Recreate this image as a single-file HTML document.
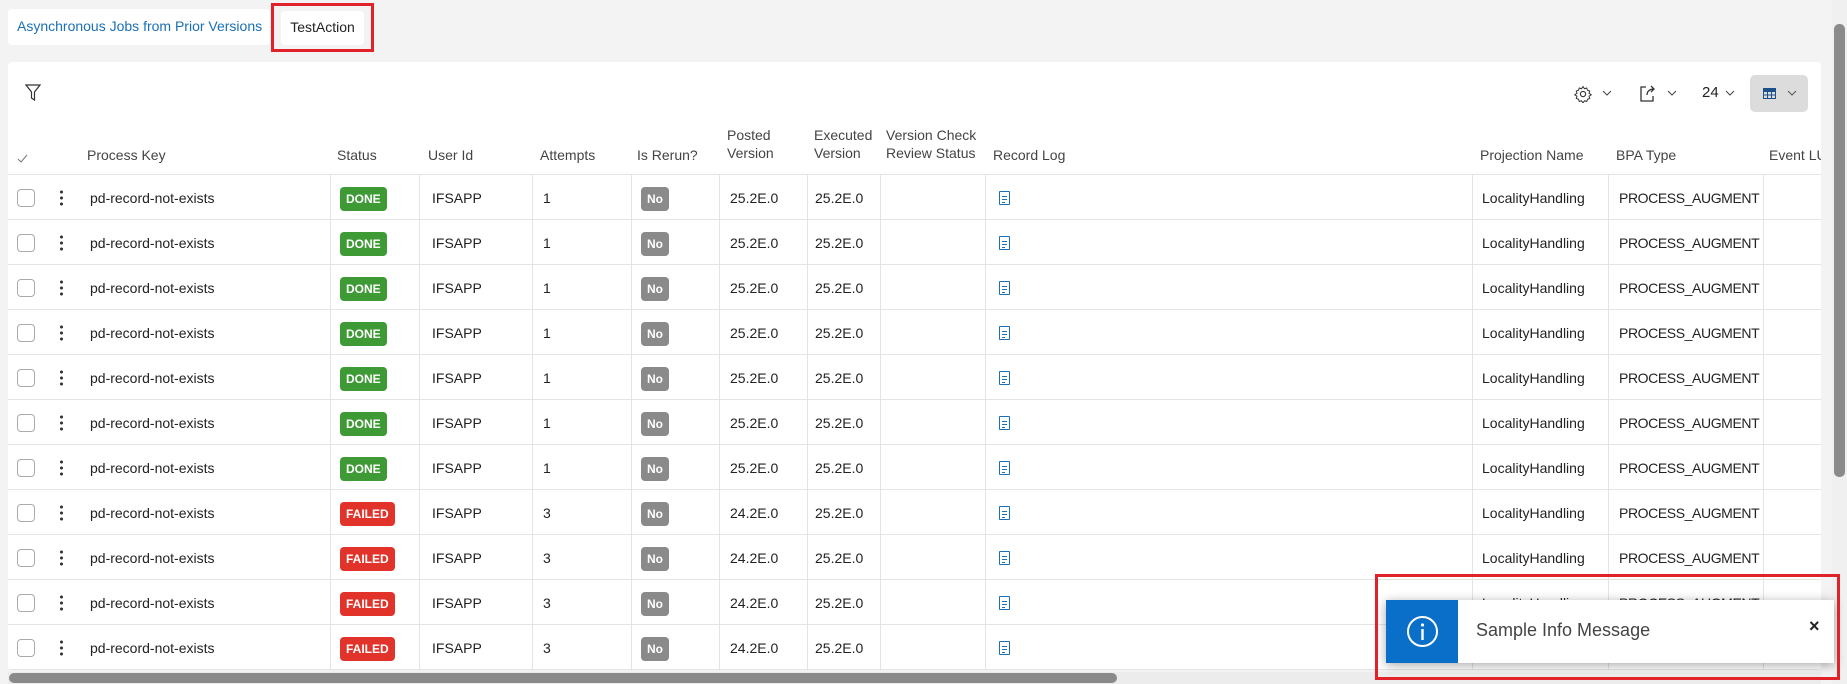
<!DOCTYPE html>
<html><head><meta charset="utf-8"><style>
*{box-sizing:border-box;margin:0;padding:0}
body{width:1847px;height:684px;overflow:hidden;background:#f3f3f4;font-family:"Liberation Sans",sans-serif;font-size:14px;color:#222;position:relative}
.tabs{position:absolute;left:8px;top:9px;height:36px;background:#fff;border-radius:4px;width:262px}
.tab1{position:absolute;left:17px;top:18px;color:#1a6fb5;font-size:14px}
.tab2{position:absolute;left:281px;top:11px;width:83px;height:34px;background:#fff;border-radius:4px;font-size:14px;text-align:center;line-height:32px}
.red1{position:absolute;left:271px;top:3px;width:103px;height:49px;border:3px solid #e2222a}
.card{position:absolute;left:8px;top:62px;width:1813px;height:608px;background:#fff;border-radius:4px;overflow:hidden}
.row{position:absolute;left:0;width:1900px;height:45px;border-bottom:1px solid #e4e4e4}
.c{position:absolute;top:0;height:44px;line-height:47px;white-space:nowrap}
.p{letter-spacing:-0.4px}
.v{position:absolute;top:0;height:45px;border-left:1px solid #e4e4e4}
.h{position:absolute;color:#444;font-size:14px;line-height:18px;white-space:nowrap}
.cb{position:absolute;left:9px;top:14px;width:18px;height:18px;border:1px solid #aaa;border-radius:4px}
.kb{position:absolute;left:52px;top:14px;width:3px;height:17px;background:radial-gradient(circle,#333 1.4px,transparent 1.6px) 0 0/3px 6px repeat-y}
.bd{display:inline-block;color:#fff;font-weight:bold;font-size:12px;line-height:24px;height:24px;padding:0 6px;border-radius:4px;vertical-align:middle}
.g{background:#3d9a35}.r{background:#e2332b}.n{background:#8a8a8a}
.ic{position:absolute;left:991px;top:16px;width:11px;height:14px;border:1.5px solid #1a6fb5;border-radius:1px;background:linear-gradient(#1a6fb5,#1a6fb5) 2px 4px/5px 1.3px no-repeat,linear-gradient(#1a6fb5,#1a6fb5) 2px 7px/5px 1.3px no-repeat,linear-gradient(#1a6fb5,#1a6fb5) 2px 10px/3px 1.3px no-repeat}
</style></head><body>
<div class="tabs"></div><div class="tab1">Asynchronous Jobs from Prior Versions</div>
<div class="tab2">TestAction</div><div class="red1"></div>
<div class="card">
<svg style="position:absolute;left:17px;top:22px" width="16" height="18" viewBox="0 0 16 18"><path d="M1 1h14l-5.5 7v8l-3-2V8z" fill="none" stroke="#333" stroke-width="1.2"/></svg>
<svg style="position:absolute;left:1566px;top:23px" width="18" height="18" viewBox="0 0 24 24"><circle cx="12" cy="12" r="3.5" fill="none" stroke="#333" stroke-width="1.5"/><path d="M12 2l2 3 3-1 1 3 3 1-1 3 3 2-3 2 1 3-3 1-1 3-3-1-2 3-2-3-3 1-1-3-3-1 1-3-3-2 3-2-1-3 3-1 1-3 3 1z" fill="none" stroke="#333" stroke-width="1.3"/></svg>
<svg style="position:absolute;left:1594px;top:28px" width="10" height="7" viewBox="0 0 10 7"><path d="M1 1l4 4 4-4" fill="none" stroke="#444"/></svg>
<svg style="position:absolute;left:1632px;top:23px" width="16" height="17" viewBox="0 0 16 17"><path d="M6 2H1v14h12v-5M7 10c0-4 3-6 7-6M11 1l3 3-3 3" fill="none" stroke="#333" stroke-width="1.3"/></svg>
<svg style="position:absolute;left:1659px;top:28px" width="10" height="7" viewBox="0 0 10 7"><path d="M1 1l4 4 4-4" fill="none" stroke="#444"/></svg>
<div style="position:absolute;left:1694px;top:22px;font-size:15px">24</div>
<svg style="position:absolute;left:1717px;top:28px" width="10" height="7" viewBox="0 0 10 7"><path d="M1 1l4 4 4-4" fill="none" stroke="#444"/></svg>
<div style="position:absolute;left:1742px;top:13px;width:58px;height:37px;background:#dcdcdc;border-radius:5px"></div>
<svg style="position:absolute;left:1755px;top:26px" width="13" height="11" viewBox="0 0 13 11"><rect x=".5" y=".5" width="12" height="10" fill="none" stroke="#1d4f8a"/><path d="M0 3.5h13M0 7h13M4.5 3v8M8.5 3v8" stroke="#1d4f8a"/><rect width="13" height="3" fill="#1d4f8a"/></svg>
<svg style="position:absolute;left:1779px;top:28px" width="10" height="7" viewBox="0 0 10 7"><path d="M1 1l4 4 4-4" fill="none" stroke="#555"/></svg>
<svg style="position:absolute;left:9px;top:92px" width="12" height="10" viewBox="0 0 12 10"><path d="M1 5l3 3 6-7" fill="none" stroke="#777"/></svg>
<div class="h" style="left:79px;top:84px">Process Key</div>
<div class="h" style="left:329px;top:84px">Status</div>
<div class="h" style="left:420px;top:84px">User Id</div>
<div class="h" style="left:532px;top:84px">Attempts</div>
<div class="h" style="left:629px;top:84px">Is Rerun?</div>
<div class="h" style="left:719px;top:64px">Posted<br>Version</div>
<div class="h" style="left:806px;top:64px">Executed<br>Version</div>
<div class="h" style="left:878px;top:64px">Version Check<br>Review Status</div>
<div class="h" style="left:985px;top:84px">Record Log</div>
<div class="h" style="left:1472px;top:84px">Projection Name</div>
<div class="h" style="left:1608px;top:84px">BPA Type</div>
<div class="h" style="left:1761px;top:84px">Event LU</div>
<div style="position:absolute;left:0;top:112px;width:1813px;border-top:1px solid #e4e4e4"></div>

<div class="row" style="top:113px"><div class="cb"></div><div class="kb"></div><div class="c" style="left:82px">pd-record-not-exists</div><div class="v" style="left:322px"></div><div class="c" style="left:332px"><span class="bd g">DONE</span></div><div class="v" style="left:411px"></div><div class="c" style="left:424px">IFSAPP</div><div class="v" style="left:524px"></div><div class="c" style="left:535px">1</div><div class="v" style="left:623px"></div><div class="c" style="left:633px"><span class="bd n">No</span></div><div class="v" style="left:711px"></div><div class="c" style="left:722px">25.2E.0</div><div class="v" style="left:799px"></div><div class="c" style="left:807px">25.2E.0</div><div class="v" style="left:872px"></div><div class="v" style="left:977px"></div><div class="ic"></div><div class="v" style="left:1464px"></div><div class="c" style="left:1474px">LocalityHandling</div><div class="v" style="left:1600px"></div><div class="c p" style="left:1611px">PROCESS_AUGMENT</div><div class="v" style="left:1755px"></div></div>
<div class="row" style="top:158px"><div class="cb"></div><div class="kb"></div><div class="c" style="left:82px">pd-record-not-exists</div><div class="v" style="left:322px"></div><div class="c" style="left:332px"><span class="bd g">DONE</span></div><div class="v" style="left:411px"></div><div class="c" style="left:424px">IFSAPP</div><div class="v" style="left:524px"></div><div class="c" style="left:535px">1</div><div class="v" style="left:623px"></div><div class="c" style="left:633px"><span class="bd n">No</span></div><div class="v" style="left:711px"></div><div class="c" style="left:722px">25.2E.0</div><div class="v" style="left:799px"></div><div class="c" style="left:807px">25.2E.0</div><div class="v" style="left:872px"></div><div class="v" style="left:977px"></div><div class="ic"></div><div class="v" style="left:1464px"></div><div class="c" style="left:1474px">LocalityHandling</div><div class="v" style="left:1600px"></div><div class="c p" style="left:1611px">PROCESS_AUGMENT</div><div class="v" style="left:1755px"></div></div>
<div class="row" style="top:203px"><div class="cb"></div><div class="kb"></div><div class="c" style="left:82px">pd-record-not-exists</div><div class="v" style="left:322px"></div><div class="c" style="left:332px"><span class="bd g">DONE</span></div><div class="v" style="left:411px"></div><div class="c" style="left:424px">IFSAPP</div><div class="v" style="left:524px"></div><div class="c" style="left:535px">1</div><div class="v" style="left:623px"></div><div class="c" style="left:633px"><span class="bd n">No</span></div><div class="v" style="left:711px"></div><div class="c" style="left:722px">25.2E.0</div><div class="v" style="left:799px"></div><div class="c" style="left:807px">25.2E.0</div><div class="v" style="left:872px"></div><div class="v" style="left:977px"></div><div class="ic"></div><div class="v" style="left:1464px"></div><div class="c" style="left:1474px">LocalityHandling</div><div class="v" style="left:1600px"></div><div class="c p" style="left:1611px">PROCESS_AUGMENT</div><div class="v" style="left:1755px"></div></div>
<div class="row" style="top:248px"><div class="cb"></div><div class="kb"></div><div class="c" style="left:82px">pd-record-not-exists</div><div class="v" style="left:322px"></div><div class="c" style="left:332px"><span class="bd g">DONE</span></div><div class="v" style="left:411px"></div><div class="c" style="left:424px">IFSAPP</div><div class="v" style="left:524px"></div><div class="c" style="left:535px">1</div><div class="v" style="left:623px"></div><div class="c" style="left:633px"><span class="bd n">No</span></div><div class="v" style="left:711px"></div><div class="c" style="left:722px">25.2E.0</div><div class="v" style="left:799px"></div><div class="c" style="left:807px">25.2E.0</div><div class="v" style="left:872px"></div><div class="v" style="left:977px"></div><div class="ic"></div><div class="v" style="left:1464px"></div><div class="c" style="left:1474px">LocalityHandling</div><div class="v" style="left:1600px"></div><div class="c p" style="left:1611px">PROCESS_AUGMENT</div><div class="v" style="left:1755px"></div></div>
<div class="row" style="top:293px"><div class="cb"></div><div class="kb"></div><div class="c" style="left:82px">pd-record-not-exists</div><div class="v" style="left:322px"></div><div class="c" style="left:332px"><span class="bd g">DONE</span></div><div class="v" style="left:411px"></div><div class="c" style="left:424px">IFSAPP</div><div class="v" style="left:524px"></div><div class="c" style="left:535px">1</div><div class="v" style="left:623px"></div><div class="c" style="left:633px"><span class="bd n">No</span></div><div class="v" style="left:711px"></div><div class="c" style="left:722px">25.2E.0</div><div class="v" style="left:799px"></div><div class="c" style="left:807px">25.2E.0</div><div class="v" style="left:872px"></div><div class="v" style="left:977px"></div><div class="ic"></div><div class="v" style="left:1464px"></div><div class="c" style="left:1474px">LocalityHandling</div><div class="v" style="left:1600px"></div><div class="c p" style="left:1611px">PROCESS_AUGMENT</div><div class="v" style="left:1755px"></div></div>
<div class="row" style="top:338px"><div class="cb"></div><div class="kb"></div><div class="c" style="left:82px">pd-record-not-exists</div><div class="v" style="left:322px"></div><div class="c" style="left:332px"><span class="bd g">DONE</span></div><div class="v" style="left:411px"></div><div class="c" style="left:424px">IFSAPP</div><div class="v" style="left:524px"></div><div class="c" style="left:535px">1</div><div class="v" style="left:623px"></div><div class="c" style="left:633px"><span class="bd n">No</span></div><div class="v" style="left:711px"></div><div class="c" style="left:722px">25.2E.0</div><div class="v" style="left:799px"></div><div class="c" style="left:807px">25.2E.0</div><div class="v" style="left:872px"></div><div class="v" style="left:977px"></div><div class="ic"></div><div class="v" style="left:1464px"></div><div class="c" style="left:1474px">LocalityHandling</div><div class="v" style="left:1600px"></div><div class="c p" style="left:1611px">PROCESS_AUGMENT</div><div class="v" style="left:1755px"></div></div>
<div class="row" style="top:383px"><div class="cb"></div><div class="kb"></div><div class="c" style="left:82px">pd-record-not-exists</div><div class="v" style="left:322px"></div><div class="c" style="left:332px"><span class="bd g">DONE</span></div><div class="v" style="left:411px"></div><div class="c" style="left:424px">IFSAPP</div><div class="v" style="left:524px"></div><div class="c" style="left:535px">1</div><div class="v" style="left:623px"></div><div class="c" style="left:633px"><span class="bd n">No</span></div><div class="v" style="left:711px"></div><div class="c" style="left:722px">25.2E.0</div><div class="v" style="left:799px"></div><div class="c" style="left:807px">25.2E.0</div><div class="v" style="left:872px"></div><div class="v" style="left:977px"></div><div class="ic"></div><div class="v" style="left:1464px"></div><div class="c" style="left:1474px">LocalityHandling</div><div class="v" style="left:1600px"></div><div class="c p" style="left:1611px">PROCESS_AUGMENT</div><div class="v" style="left:1755px"></div></div>
<div class="row" style="top:428px"><div class="cb"></div><div class="kb"></div><div class="c" style="left:82px">pd-record-not-exists</div><div class="v" style="left:322px"></div><div class="c" style="left:332px"><span class="bd r">FAILED</span></div><div class="v" style="left:411px"></div><div class="c" style="left:424px">IFSAPP</div><div class="v" style="left:524px"></div><div class="c" style="left:535px">3</div><div class="v" style="left:623px"></div><div class="c" style="left:633px"><span class="bd n">No</span></div><div class="v" style="left:711px"></div><div class="c" style="left:722px">24.2E.0</div><div class="v" style="left:799px"></div><div class="c" style="left:807px">25.2E.0</div><div class="v" style="left:872px"></div><div class="v" style="left:977px"></div><div class="ic"></div><div class="v" style="left:1464px"></div><div class="c" style="left:1474px">LocalityHandling</div><div class="v" style="left:1600px"></div><div class="c p" style="left:1611px">PROCESS_AUGMENT</div><div class="v" style="left:1755px"></div></div>
<div class="row" style="top:473px"><div class="cb"></div><div class="kb"></div><div class="c" style="left:82px">pd-record-not-exists</div><div class="v" style="left:322px"></div><div class="c" style="left:332px"><span class="bd r">FAILED</span></div><div class="v" style="left:411px"></div><div class="c" style="left:424px">IFSAPP</div><div class="v" style="left:524px"></div><div class="c" style="left:535px">3</div><div class="v" style="left:623px"></div><div class="c" style="left:633px"><span class="bd n">No</span></div><div class="v" style="left:711px"></div><div class="c" style="left:722px">24.2E.0</div><div class="v" style="left:799px"></div><div class="c" style="left:807px">25.2E.0</div><div class="v" style="left:872px"></div><div class="v" style="left:977px"></div><div class="ic"></div><div class="v" style="left:1464px"></div><div class="c" style="left:1474px">LocalityHandling</div><div class="v" style="left:1600px"></div><div class="c p" style="left:1611px">PROCESS_AUGMENT</div><div class="v" style="left:1755px"></div></div>
<div class="row" style="top:518px"><div class="cb"></div><div class="kb"></div><div class="c" style="left:82px">pd-record-not-exists</div><div class="v" style="left:322px"></div><div class="c" style="left:332px"><span class="bd r">FAILED</span></div><div class="v" style="left:411px"></div><div class="c" style="left:424px">IFSAPP</div><div class="v" style="left:524px"></div><div class="c" style="left:535px">3</div><div class="v" style="left:623px"></div><div class="c" style="left:633px"><span class="bd n">No</span></div><div class="v" style="left:711px"></div><div class="c" style="left:722px">24.2E.0</div><div class="v" style="left:799px"></div><div class="c" style="left:807px">25.2E.0</div><div class="v" style="left:872px"></div><div class="v" style="left:977px"></div><div class="ic"></div><div class="v" style="left:1464px"></div><div class="c" style="left:1474px">LocalityHandling</div><div class="v" style="left:1600px"></div><div class="c p" style="left:1611px">PROCESS_AUGMENT</div><div class="v" style="left:1755px"></div></div>
<div class="row" style="top:563px"><div class="cb"></div><div class="kb"></div><div class="c" style="left:82px">pd-record-not-exists</div><div class="v" style="left:322px"></div><div class="c" style="left:332px"><span class="bd r">FAILED</span></div><div class="v" style="left:411px"></div><div class="c" style="left:424px">IFSAPP</div><div class="v" style="left:524px"></div><div class="c" style="left:535px">3</div><div class="v" style="left:623px"></div><div class="c" style="left:633px"><span class="bd n">No</span></div><div class="v" style="left:711px"></div><div class="c" style="left:722px">24.2E.0</div><div class="v" style="left:799px"></div><div class="c" style="left:807px">25.2E.0</div><div class="v" style="left:872px"></div><div class="v" style="left:977px"></div><div class="ic"></div><div class="v" style="left:1464px"></div><div class="c" style="left:1474px">LocalityHandling</div><div class="v" style="left:1600px"></div><div class="c p" style="left:1611px">PROCESS_AUGMENT</div><div class="v" style="left:1755px"></div></div>
</div>
<div style="position:absolute;left:8px;top:672px;width:1813px;height:12px;background:#ececec"></div>
<div style="position:absolute;left:9px;top:673px;width:1108px;height:10px;background:#8a8a8a;border-radius:5px"></div>
<div style="position:absolute;left:1832px;top:0;width:15px;height:684px;background:#f0f0f0"></div>
<div style="position:absolute;left:1834px;top:24px;width:11px;height:453px;background:#8a8a8a;border-radius:5px"></div>
<div style="position:absolute;left:1386px;top:600px;width:448px;height:63px;background:#fff;box-shadow:0 2px 10px rgba(0,0,0,.35)">
<div style="position:absolute;left:0;top:0;width:72px;height:63px;background:#0a6fc8"></div>
<svg style="position:absolute;left:20px;top:15px" width="33" height="33" viewBox="0 0 33 33"><circle cx="16.5" cy="16.5" r="14.5" fill="none" stroke="#fff" stroke-width="2"/><circle cx="16.5" cy="10" r="1.6" fill="#fff"/><rect x="15.3" y="14" width="2.4" height="11" fill="#fff"/></svg>
<div style="position:absolute;left:90px;top:20px;font-size:18px;color:#444">Sample Info Message</div>
<div style="position:absolute;left:423px;top:16px;font-size:18px;font-weight:bold;color:#222">×</div>
</div>
<div style="position:absolute;left:1375px;top:574px;width:465px;height:106px;border:3px solid #e2222a"></div>
</body></html>
